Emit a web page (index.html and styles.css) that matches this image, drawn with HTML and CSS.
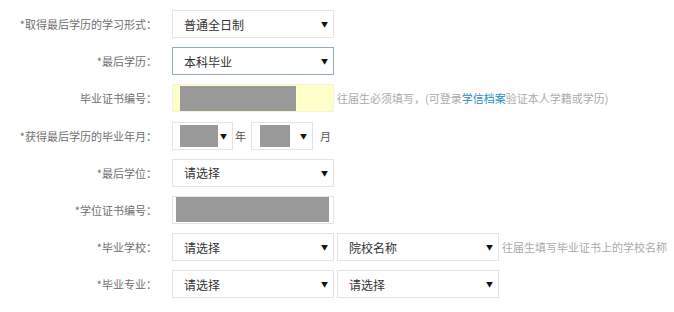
FILE: index.html
```html
<!DOCTYPE html>
<html lang="zh-CN">
<head>
  <meta charset="UTF-8">
  <title>学历信息</title>
  <link rel="stylesheet" href="styles.css">
</head>
<body>
  <div class="form">
    <div class="row">
      <label class="label">*取得最后学历的学习形式：</label>
      <div class="select"><span>普通全日制</span><i class="arrow">▼</i></div>
    </div>
    <div class="row">
      <label class="label">*最后学历：</label>
      <div class="select focus"><span>本科毕业</span><i class="arrow">▼</i></div>
    </div>
    <div class="row">
      <label class="label">毕业证书编号：</label>
      <div class="input yellow"><div class="mask mask-cert"></div></div>
      <span class="hint">往届生必须填写，(可登录<a href="#">学信档案</a>验证本人学籍或学历)</span>
    </div>
    <div class="row">
      <label class="label">*获得最后学历的毕业年月：</label>
      <div class="select small year"><div class="mask mask-year"></div><i class="arrow">▼</i></div>
      <span class="unit">年</span>
      <div class="select small month"><div class="mask mask-month"></div><i class="arrow">▼</i></div>
      <span class="unit unit-last">月</span>
    </div>
    <div class="row">
      <label class="label">*最后学位：</label>
      <div class="select"><span>请选择</span><i class="arrow">▼</i></div>
    </div>
    <div class="row">
      <label class="label">*学位证书编号：</label>
      <div class="input"><div class="mask mask-degree"></div></div>
    </div>
    <div class="row">
      <label class="label">*毕业学校：</label>
      <div class="select"><span>请选择</span><i class="arrow">▼</i></div>
      <div class="select second"><span>院校名称</span><i class="arrow">▼</i></div>
      <span class="hint">往届生填写毕业证书上的学校名称</span>
    </div>
    <div class="row">
      <label class="label">*毕业专业：</label>
      <div class="select"><span>请选择</span><i class="arrow">▼</i></div>
      <div class="select second"><span>请选择</span><i class="arrow">▼</i></div>
    </div>
  </div>
</body>
</html>
```

FILE: styles.css
```css
body {
  margin: 0;
  background-color: #ffffff;
  font-family: "Microsoft YaHei", "Noto Sans CJK SC", sans-serif;
}
.form {
  display: flex;
  flex-direction: column;
  gap: 9.2px;
  padding-top: 10px;
}
.row {
  display: flex;
  align-items: center;
  height: 28px;
}
.label {
  width: 157px;
  text-align: right;
  font-size: 11px;
  color: #6f6f6f;
  margin-right: 15px;
  white-space: nowrap;
}
.select, .input {
  box-sizing: border-box;
  width: 162px;
  height: 28px;
  border: 1px solid #e4e4e4;
  background-color: #ffffff;
  display: flex;
  align-items: center;
}
.select span {
  font-size: 12px;
  color: #333333;
  padding-left: 11px;
  flex: 1;
}
.select.focus {
  border-color: #93abb9;
}
.arrow {
  font-style: normal;
  font-size: 7px;
  color: #111111;
  margin-right: 5px;
}
.select.small {
  width: 61px;
}
.select.small .mask {
  flex: 1;
}
.select.month {
  width: 62px;
}
.second {
  margin-left: 3px;
}
.unit {
  font-size: 11px;
  color: #555555;
  margin: 0 5px 0 2px;
}
.unit-last {
  margin-left: 7px;
}
.input.yellow {
  background-color: #ffffcc;
  border-color: #f3f3d8;
}
.mask {
  background-color: #999999;
  height: 25px;
}
.mask-cert {
  width: 116px;
  margin-left: 7px;
}
.mask-year {
  margin-left: 7px;
  margin-right: 2px;
  height: 22px;
}
.mask-month {
  margin-left: 8px;
  margin-right: 10px;
  height: 22px;
}
.mask-degree {
  width: 153px;
  margin-left: 3px;
  height: 25px;
}
.hint {
  font-size: 11px;
  color: #aaaaaa;
  margin-left: 3px;
  white-space: nowrap;
}
.hint a {
  color: #2b8cbf;
  text-decoration: none;
}
```
